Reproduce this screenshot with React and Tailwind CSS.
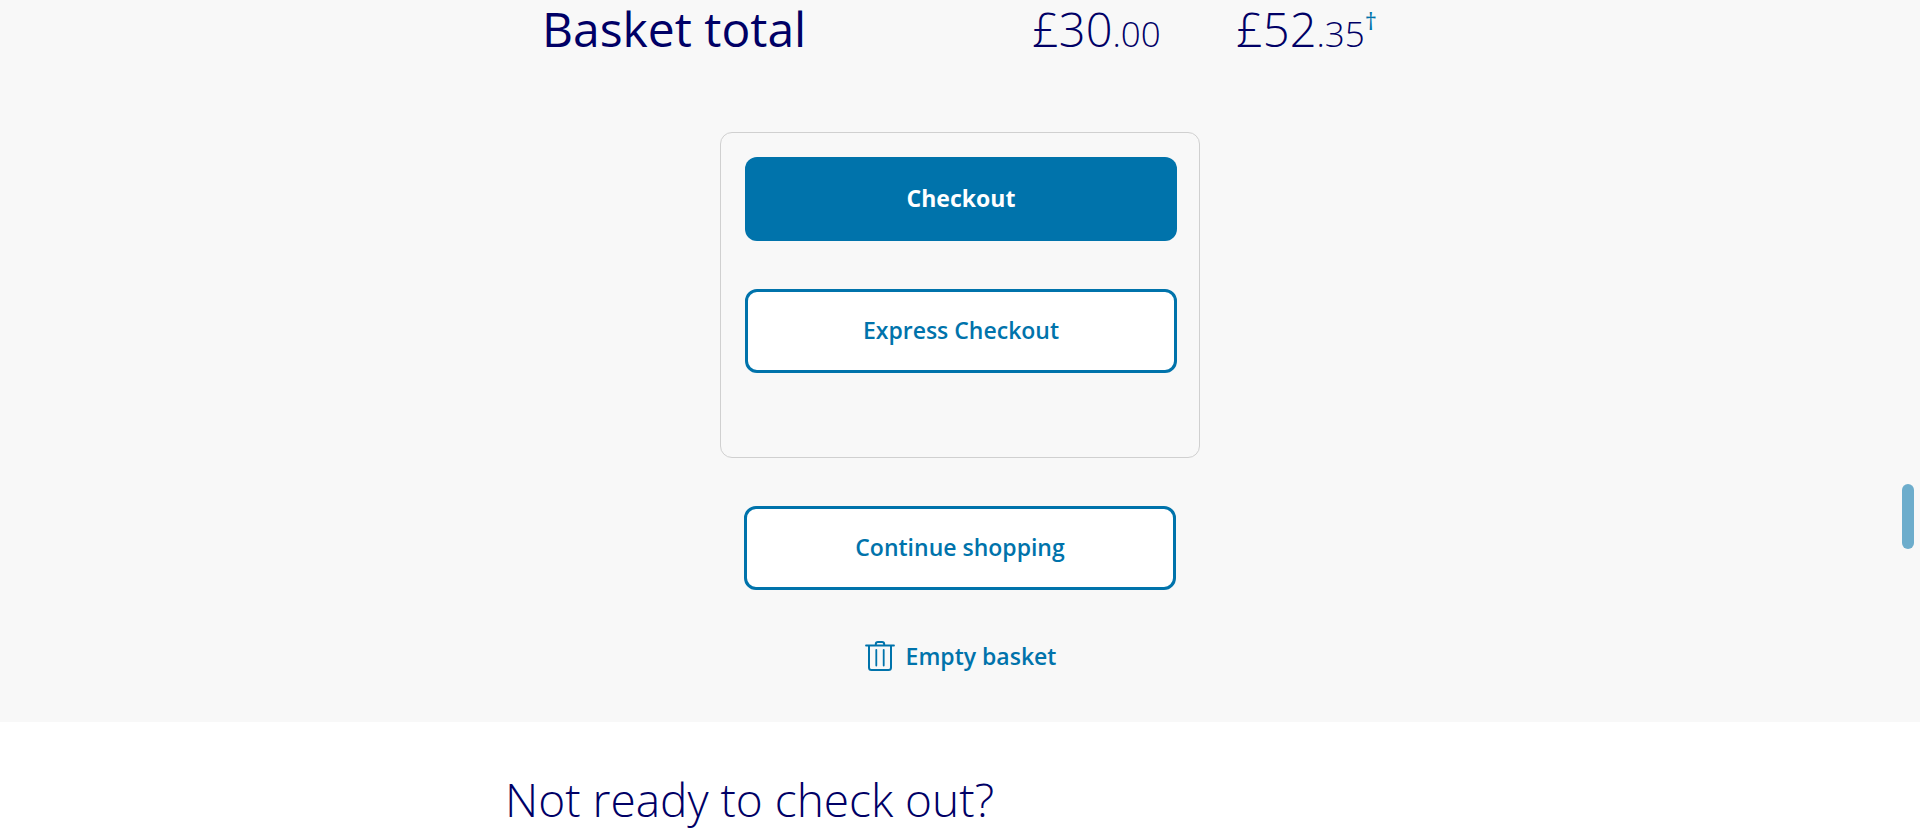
const outlineButton =
  "h-[84px] w-full rounded-xl border-3 border-[#0073ab] bg-white pb-0.5 text-[23px] font-semibold text-[#0073ab]";

function TrashIcon() {
  return (
    <svg
      className="h-8 w-8"
      viewBox="0 0 32 32"
      fill="none"
      stroke="currentColor"
      strokeWidth="2"
      strokeLinecap="round"
      strokeLinejoin="round"
      aria-hidden="true"
    >
      <path d="M2 5.5H30" strokeWidth="1.8" />
      <path d="M11.8 5V4.2Q11.8 2 14 2H18Q20.2 2 20.2 4.2V5" />
      <path d="M5 6V27.5Q5 30 7.5 30H24.5Q27 30 27 27.5V6" />
      <path d="M12.3 9.8V25.5M19.7 9.8V25.5" strokeWidth="1.8" />
    </svg>
  );
}

function Price({ pounds, pence, children }) {
  return (
    <p className="text-[47px] leading-[58px] font-light">
      {pounds}
      <span className="text-[35px]">{pence}</span>
      {children}
    </p>
  );
}

export default function App() {
  return (
    <div className="bg-white font-['Open_Sans','Noto_Sans',sans-serif] text-[#000066]">
      <main className="bg-[#f8f8f8] pb-12">
        <div className="mx-auto flex max-w-[840px] items-baseline">
          <h2 className="flex-1 pl-0.5 text-5xl leading-[58px] font-medium">Basket total</h2>
          <div className="w-[204px]">
            <Price pounds="£30" pence=".00" />
          </div>
          <div className="w-[144px]">
            <Price pounds="£52" pence=".35">
              <a href="#dagger" className="align-super text-2xl leading-none font-normal text-[#0073ab]">†</a>
            </Price>
          </div>
        </div>

        <section className="mx-auto mt-[69px] flex max-w-[480px] flex-col gap-12 rounded-xl border border-[#d0d0d0] pt-6 pr-[22px] pb-[84px] pl-6">
          <button type="button" className="h-[84px] w-full rounded-xl bg-[#0073ab] pb-0.5 text-[23px] font-bold text-white">
            Checkout
          </button>
          <button type="button" className={outlineButton}>Express Checkout</button>
        </section>

        <div className="mx-auto mt-12 flex max-w-[432px] flex-col items-center gap-12">
          <button type="button" className={outlineButton}>Continue shopping</button>
          <button type="button" className="flex items-center gap-2.5 text-[23px] leading-9 font-semibold text-[#0073ab]">
            <TrashIcon />
            Empty basket
          </button>
        </div>
      </main>

      <section className="mx-auto max-w-[910px] pt-[47px] pb-2.5">
        <h2 className="text-[46px] leading-[60px] font-light">Not ready to check out?</h2>
      </section>

      <div className="fixed top-[484px] right-1.5 h-[65px] w-3 rounded-full bg-[#6dadcc]" />
    </div>
  );
}
